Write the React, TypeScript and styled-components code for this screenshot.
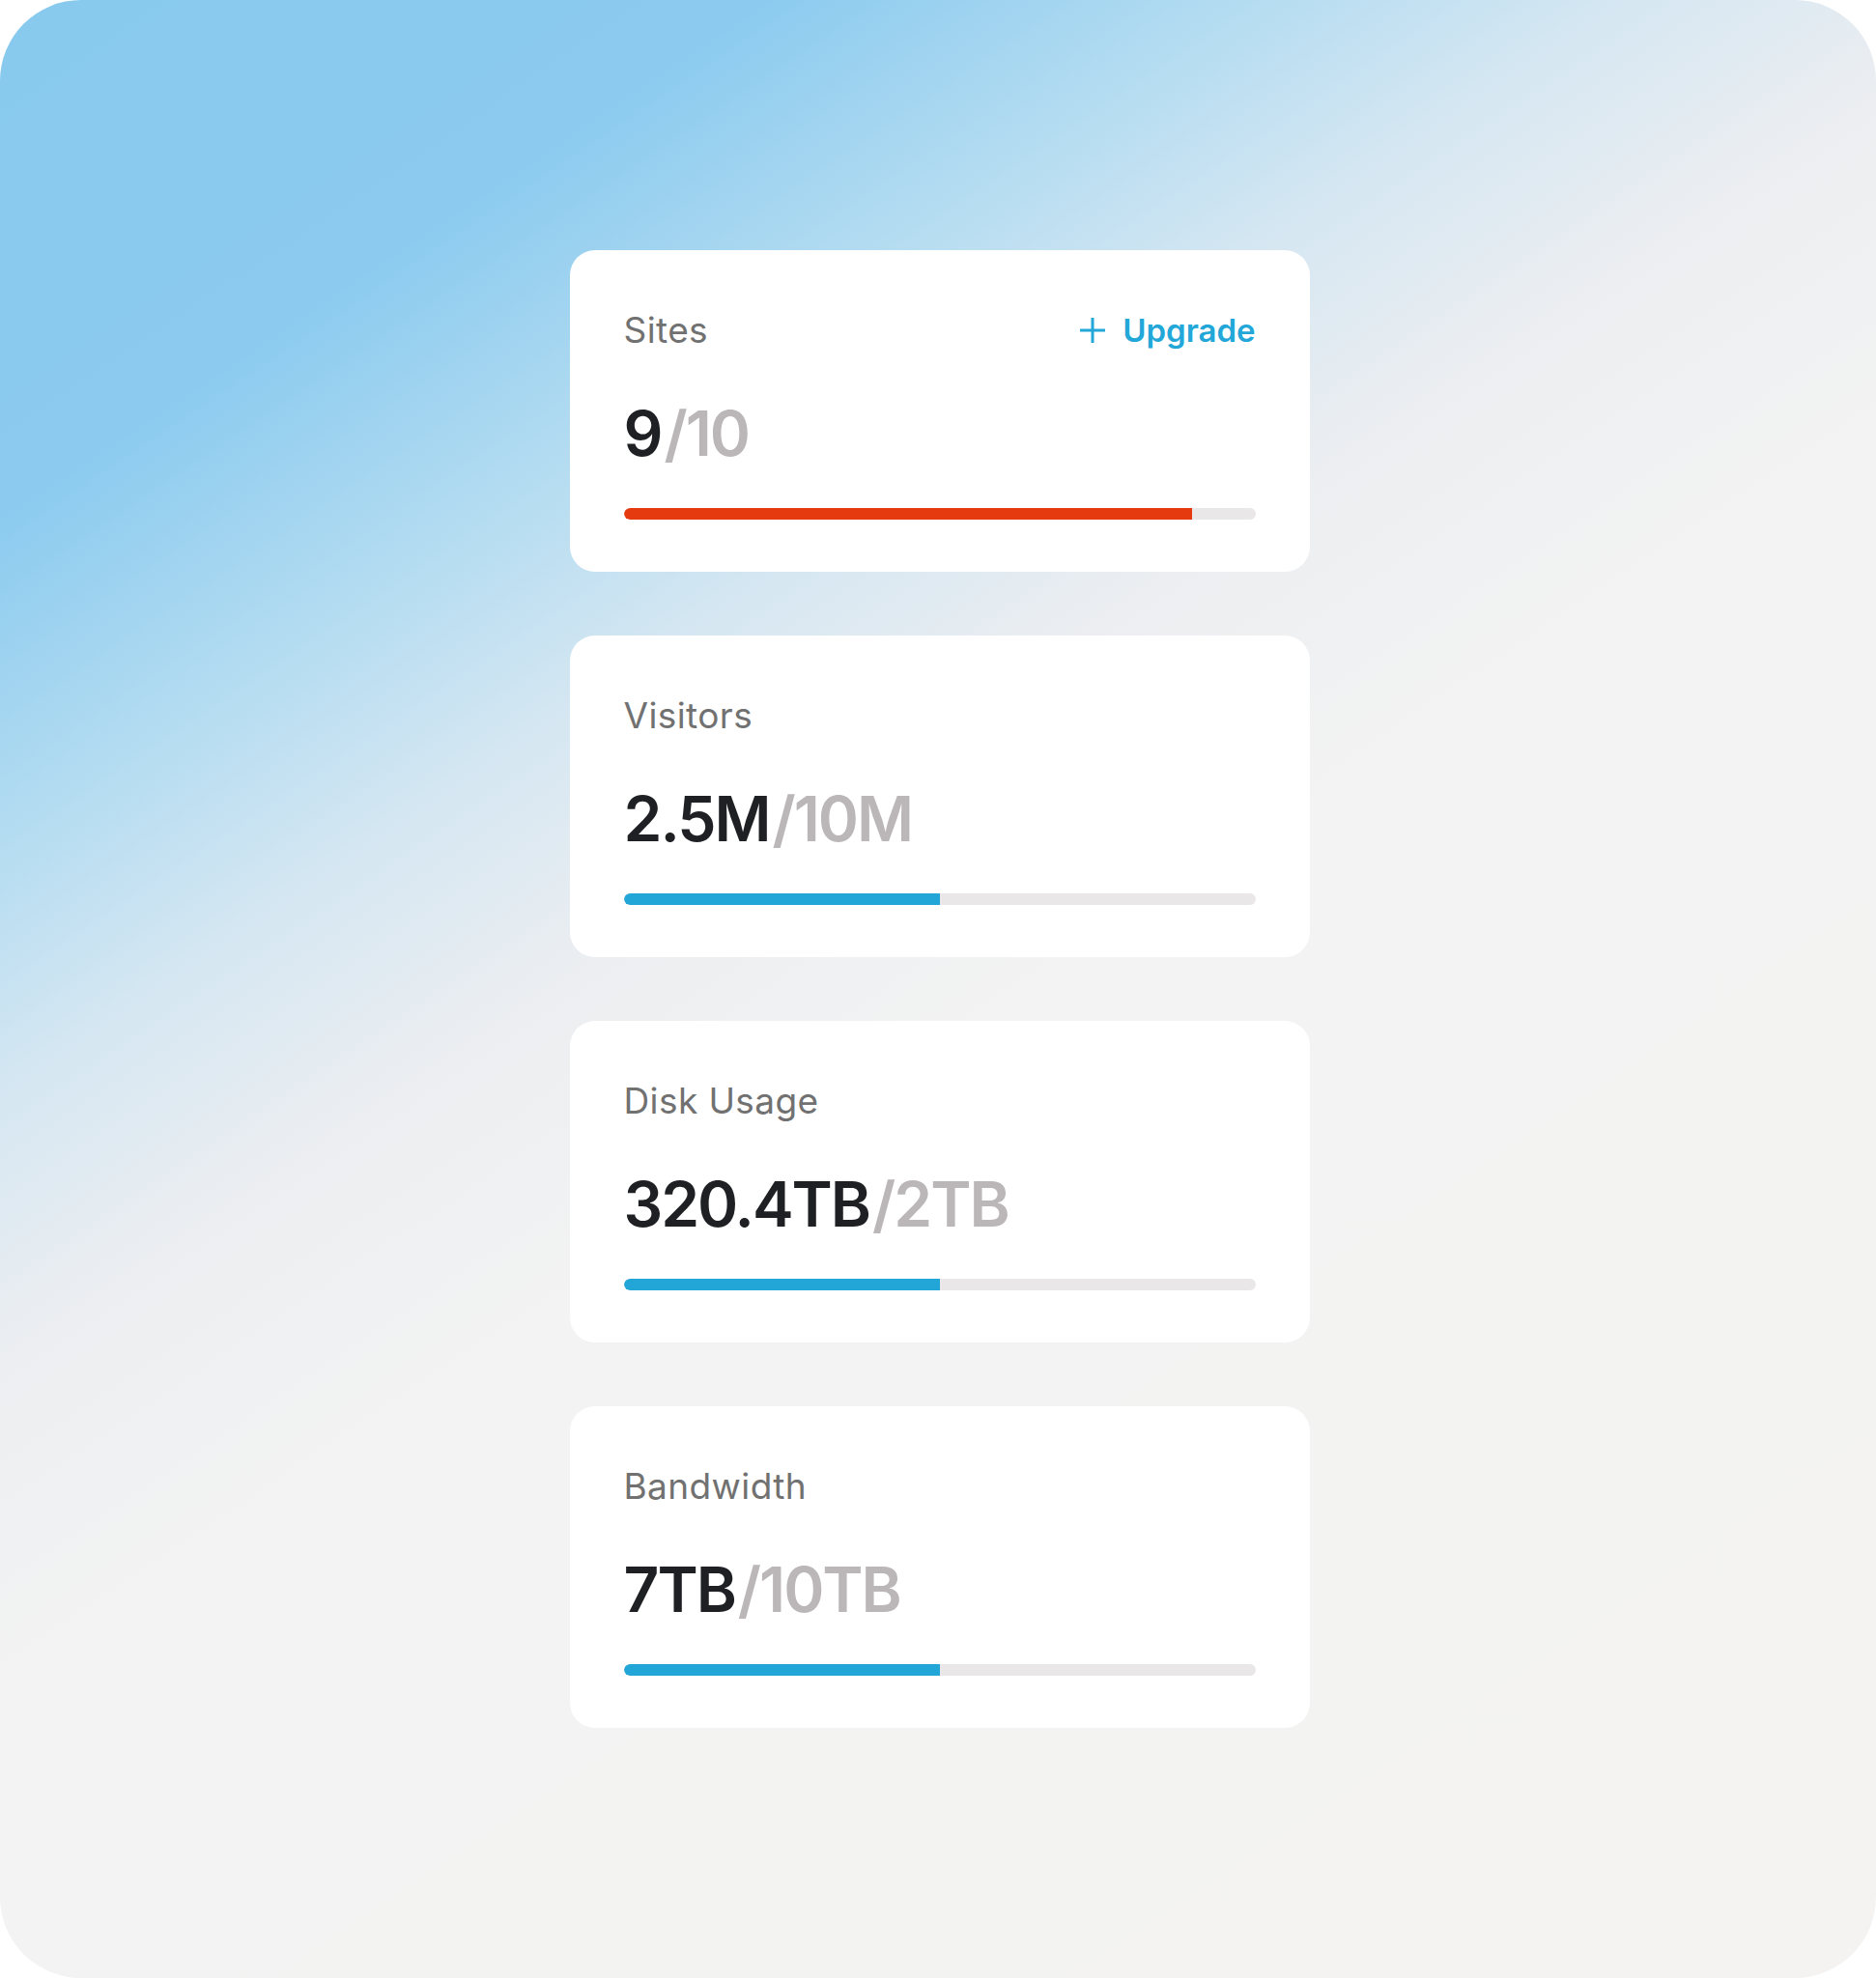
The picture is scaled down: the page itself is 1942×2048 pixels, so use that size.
import React from 'react';
import styled, { createGlobalStyle } from 'styled-components';

const GlobalStyle = createGlobalStyle`
  html, body {
    margin: 0;
    padding: 0;
    background: #ffffff;
  }
  body {
    font-family: Inter, "Noto Sans", "Liberation Sans", sans-serif;
    -webkit-font-smoothing: antialiased;
  }
`;

const Frame = styled.div`
  width: 1942px;
  height: 2048px;
  box-sizing: border-box;
  padding-left: 3px;
  border-radius: 84px;
  background: linear-gradient(
    146deg,
    #88c9ee 0%,
    #8ccbef 16%,
    #b4dcf1 26%,
    #d6e7f2 34%,
    #eceef1 42%,
    #f3f3f3 52%,
    #f4f3f2 100%
  );
  display: flex;
  flex-direction: column;
  align-items: center;
  justify-content: center;
  gap: 66px;
`;

const Card = styled.section`
  width: 766px;
  box-sizing: border-box;
  padding: 65px 56px 54px;
  background: #ffffff;
  border-radius: 26px;
`;

const Header = styled.div`
  display: flex;
  align-items: baseline;
  justify-content: space-between;
`;

const Label = styled.span`
  font-size: 37px;
  line-height: 36px;
  font-weight: 400;
  letter-spacing: 0.4px;
  color: #717171;
`;

const UpgradeButton = styled.button`
  display: flex;
  align-items: center;
  gap: 18px;
  padding: 0;
  border: none;
  background: none;
  cursor: pointer;
  font-family: inherit;
  font-size: 33px;
  line-height: 36px;
  font-weight: 600;
  color: #22a7d8;

  svg {
    width: 26px;
    height: 26px;
    flex-shrink: 0;
  }
`;

const Value = styled.div`
  margin-top: 57px;
  font-size: 64px;
  line-height: 64px;
  font-weight: 600;
  letter-spacing: -2px;
  color: #1e2023;
`;

const Limit = styled.span`
  margin-left: 3px;
  color: #bbb7b8;
`;

const Track = styled.div`
  margin-top: 45px;
  height: 12px;
  border-radius: 6px;
  background: #e9e7e7;
  overflow: hidden;
`;

const Fill = styled.div<{ $tone: 'danger' | 'normal' }>`
  height: 100%;
  border-radius: 6px 0 0 6px;
  background: ${(p) => (p.$tone === 'danger' ? '#e5390f' : '#22a6d7')};
`;

const PlusIcon = () => (
  <svg viewBox="0 0 26 26" fill="none" stroke="currentColor" strokeWidth="3">
    <line x1="13" y1="0" x2="13" y2="26" />
    <line x1="0" y1="13" x2="26" y2="13" />
  </svg>
);

type Metric = {
  label: string;
  used: string;
  limit: string;
  percent: number;
  upgrade?: boolean;
};

const metrics: Metric[] = [
  { label: 'Sites', used: '9', limit: '/10', percent: 90, upgrade: true },
  { label: 'Visitors', used: '2.5M', limit: '/10M', percent: 50 },
  { label: 'Disk Usage', used: '320.4TB', limit: '/2TB', percent: 50 },
  { label: 'Bandwidth', used: '7TB', limit: '/10TB', percent: 50 },
];

const UsageCard = ({ metric }: { metric: Metric }) => (
  <Card>
    <Header>
      <Label>{metric.label}</Label>
      {metric.upgrade && (
        <UpgradeButton type="button">
          <PlusIcon />
          Upgrade
        </UpgradeButton>
      )}
    </Header>
    <Value>
      {metric.used}
      <Limit>{metric.limit}</Limit>
    </Value>
    <Track>
      <Fill
        $tone={metric.percent >= 90 ? 'danger' : 'normal'}
        style={{ width: `${metric.percent}%` }}
      />
    </Track>
  </Card>
);

const App = () => (
  <>
    <GlobalStyle />
    <Frame>
      {metrics.map((m) => (
        <UsageCard key={m.label} metric={m} />
      ))}
    </Frame>
  </>
);

export default App;
